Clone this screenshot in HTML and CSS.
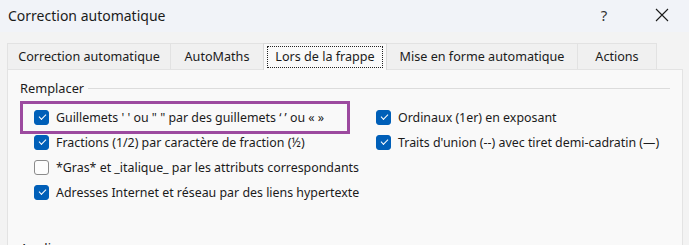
FILE: index.html
```html
<!DOCTYPE html>
<html lang="fr">
<head>
<meta charset="utf-8">
<link rel="stylesheet" href="styles.css">
</head>
<body>
<div class="window">
  <div class="titlebar">
    <div class="title">Correction automatique</div>
    <div class="tbtns">
      <span class="help">?</span>
      <span class="close"><svg width="14" height="14" viewBox="0 0 14 14"><path d="M1 1L13 13M13 1L1 13" stroke="#1a1a1a" stroke-width="1.1" fill="none"/></svg></span>
    </div>
  </div>
  <div class="tabs">
    <div class="tab t1">Correction automatique</div>
    <div class="tab t2">AutoMaths</div>
    <div class="tab t3 active"><span class="focus">Lors de la frappe</span></div>
    <div class="tab t4">Mise en forme automatique</div>
    <div class="tab t5">Actions</div>
  </div>
  <div class="panel">
    <div class="group">
      <div class="legend"><span>Remplacer</span><div class="line"></div></div>
      <div class="cols">
        <div class="col left">
          <label class="row hl"><span class="cb on"></span><span>Guillemets ' ' ou " " par des guillemets ‘ ’ ou « »</span></label>
          <label class="row"><span class="cb on"></span><span>Fractions (1/2) par caractère de fraction (½)</span></label>
          <label class="row"><span class="cb"></span><span>*Gras* et _italique_ par les attributs correspondants</span></label>
          <label class="row"><span class="cb on"></span><span>Adresses Internet et réseau par des liens hypertexte</span></label>
        </div>
        <div class="col right">
          <label class="row"><span class="cb on"></span><span>Ordinaux (1er) en exposant</span></label>
          <label class="row"><span class="cb on"></span><span>Traits d'union (--) avec tiret demi-cadratin (—)</span></label>
        </div>
      </div>
    </div>
    <div class="legend2">Appliquer</div>
  </div>
</div>
</body>
</html>
```
FILE: styles.css
```css
* { box-sizing: border-box; }
html, body { margin: 0; padding: 0; }
body {
  width: 689px; height: 245px; overflow: hidden;
  background: #f3f3f3;
  font-family: "Noto Sans", "Open Sans", sans-serif;
  color: #1b1b1b;
  font-size: 12.4px;
}
.titlebar {
  height: 32px;
  display: flex; align-items: center; justify-content: space-between;
  background: #f1f3f8;
}
.title { padding-left: 8px; font-size: 14px; margin-top: -2px; }
.tbtns { display: flex; align-items: center; }
.help { font-size: 15px; width: 18px; text-align: center; margin-right: 42px; margin-top: -2px; color: #333; }
.close { width: 14px; height: 14px; margin-right: 20px; display: flex; margin-top: -2px; }
.tabs {
  display: flex; margin-left: 7px; margin-top: 11px; height: 26px; align-items: flex-end;
}
.tab {
  height: 26px; display: flex; align-items: center; justify-content: center;
  background: #f0f0f0; border: 1px solid #e2e2e2; border-bottom: none; margin-right: -1px;
  font-size: 12.6px;
}
.t1 { width: 164px; }
.t2 { width: 94px; }
.t3 { width: 124px; }
.t4 { width: 192px; }
.t5 { width: 80px; }
.tab.active { background: #f9f9f9; border-color: #d9d9d9; position: relative; z-index: 1; height: 27px; margin-bottom: -1px; }
.focus { border: 1px dotted #222; padding: 1px 7px 2px; }
.panel {
  margin-left: 7px; width: 676px; height: 200px;
  background: #f9f9f9; border: 1px solid #e3e3e3;
}
.group { padding: 8px 12px 0 12px; }
.legend { display: flex; align-items: center; height: 20px; font-size: 12.8px; }
.legend .line { flex: 1; height: 1px; background: #dcdcdc; margin-left: 4px; }
.cols { display: flex; margin-top: 7px; }
.col.left { width: 356px; padding-left: 14px; }
.col.right { padding-left: 0; }
.row { display: flex; align-items: center; height: 25px; white-space: nowrap; }
.cb {
  width: 15px; height: 15px; border-radius: 3px; margin-right: 7px; flex: none;
  background: #fdfdfd; border: 1px solid #8b8b8b; position: relative;
}
.cb.on { background: #005fb8; border-color: #005fb8; }
.cb.on::after {
  content: ""; position: absolute; left: 4px; top: 3px; width: 6px; height: 3px;
  border-left: 1.3px solid #fff; border-bottom: 1.3px solid #fff; transform: rotate(-45deg);
}
.row.hl { outline: 3px solid #9c4a9f; outline-offset: 0; margin-left: -11px; padding-left: 11px; width: 324px; height: 27px; margin-top: -1px; margin-bottom: -1px;}
.legend2 { padding-left: 12px; margin-top: 34px; font-size: 13px; line-height: 18px; }
```
